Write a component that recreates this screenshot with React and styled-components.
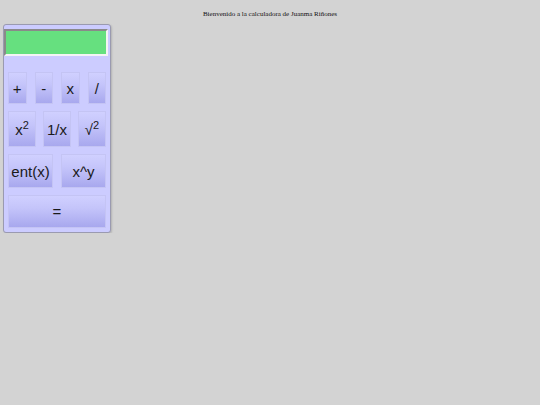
import React from "react";
import styled, { createGlobalStyle } from "styled-components";

const GlobalStyle = createGlobalStyle`
  body {
    margin: 0;
    background: #d3d3d3;
    font-family: "Liberation Sans", Arial, sans-serif;
  }
`;

const Page = styled.div`
  padding: 9px 3px 0;
`;

const Title = styled.p`
  margin: 0 0 5px;
  text-align: center;
  font-family: "Liberation Serif", "Times New Roman", serif;
  font-size: 7px;
  color: #111;
  line-height: 10px;
`;

const Calculator = styled.div`
  width: 106px;
  padding: 4px 0 4px 0;
  background: #ccccff;
  border: 1px solid #9a9ab0;
  border-radius: 3px;
  box-shadow: 1px 1px 2px rgba(0, 0, 0, 0.15);
`;

const Display = styled.input`
  display: block;
  box-sizing: border-box;
  width: 104px;
  height: 27px;
  margin: 0 0 16px 0;
  background: #66e07f;
  border: 2px solid;
  border-color: #8a8a8a #f4f4f4 #f4f4f4 #8a8a8a;
  outline: none;
`;

const Keys = styled.div`
  display: flex;
  flex-direction: column;
  gap: 7px;
  padding: 0 4px;
`;

const Row = styled.div`
  display: grid;
  grid-template-columns: repeat(${(p) => p.$cols}, 1fr);
  column-gap: ${(p) => (p.$cols === 3 ? 7 : 8)}px;
`;

const Key = styled.button`
  height: ${(p) => p.$h || 33}px;
  padding: 0;
  border: 1px solid #c4c4f4;
  background: linear-gradient(to bottom, #d0d0ff 0%, #c4c4fa 40%, #a8a8ee 100%);
  font-family: "Liberation Sans", Arial, sans-serif;
  font-size: 15px;
  color: #1a1a1a;
  cursor: pointer;

  sup {
    font-size: 11px;
    vertical-align: 6px;
    line-height: 0;
  }
`;

export default function App() {
  return (
    <>
      <GlobalStyle />
      <Page>
        <Title>Bienvenido a la calculadora de Juanma Riñones</Title>
        <Calculator>
          <Display type="text" />
          <Keys>
            <Row $cols={4}>
              <Key $h={32}>+</Key>
              <Key $h={32}>-</Key>
              <Key $h={32}>x</Key>
              <Key $h={32}>/</Key>
            </Row>
            <Row $cols={3}>
              <Key $h={36}>
                x<sup>2</sup>
              </Key>
              <Key $h={36}>1/x</Key>
              <Key $h={36}>
                √<sup>2</sup>
              </Key>
            </Row>
            <Row $cols={2}>
              <Key $h={34}>ent(x)</Key>
              <Key $h={34}>x^y</Key>
            </Row>
            <Row $cols={1}>
              <Key $h={33}>=</Key>
            </Row>
          </Keys>
        </Calculator>
      </Page>
    </>
  );
}
